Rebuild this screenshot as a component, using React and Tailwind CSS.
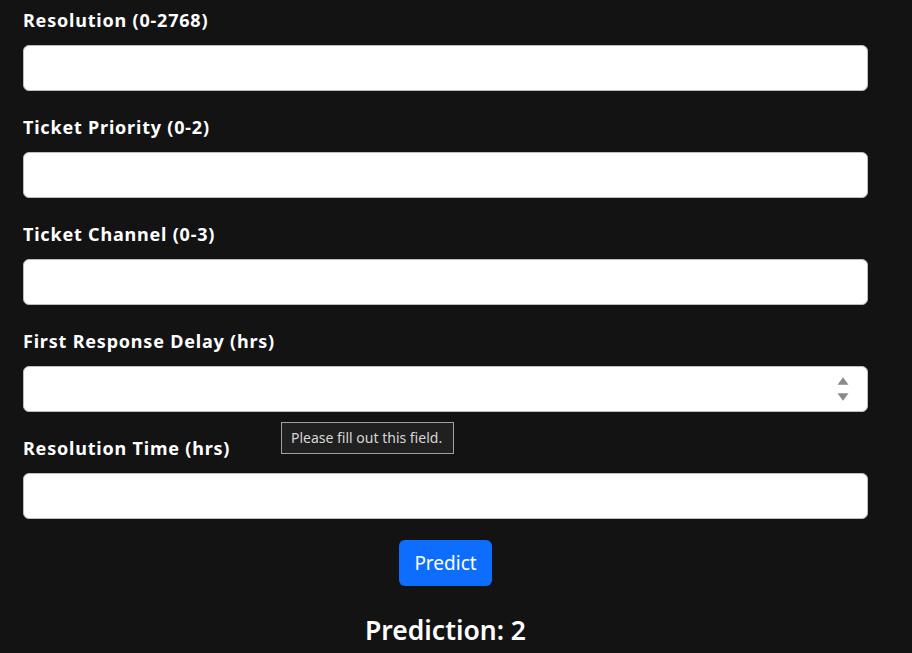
import React from "react";

const fields = [
  { label: "Resolution (0-2768)" },
  { label: "Ticket Priority (0-2)" },
  { label: "Ticket Channel (0-3)" },
  { label: "First Response Delay (hrs)", spinner: true },
  { label: "Resolution Time (hrs)" },
];

export default function App() {
  return (
    <div
      className="relative w-[912px] h-[653px] overflow-hidden bg-[#131313] text-white"
      style={{ fontFamily: '"Noto Sans", "Open Sans", sans-serif' }}
    >
      <div className="ml-[23px] w-[845px] pt-[7px]">
        <div className="flex flex-col gap-[23px]">
          {fields.map((f) => (
            <div key={f.label}>
              <div className="h-[27px] mb-[11px] text-[18px] font-bold leading-[27px] tracking-[0.8px]">
                {f.label}
              </div>
              <div className="relative h-[46px] rounded-[6px] bg-white border border-[#bdbdbd]">
                {f.spinner && (
                  <div className="absolute right-[18px] top-[10px] flex flex-col items-center gap-[8px]">
                    <svg width="12" height="8" viewBox="0 0 12 8">
                      <path d="M6 0.3 L11.5 7.7 L0.5 7.7 Z" fill="#8a8a8a" />
                    </svg>
                    <svg width="12" height="8" viewBox="0 0 12 8">
                      <path d="M0.5 0.3 L11.5 0.3 L6 7.7 Z" fill="#8a8a8a" />
                    </svg>
                  </div>
                )}
              </div>
            </div>
          ))}
        </div>
        <div className="flex justify-center mt-[21px]">
          <button className="w-[93px] h-[46px] rounded-[6px] bg-[#0d6efd] text-white text-[19px]">
            Predict
          </button>
        </div>
        <div className="mt-[27px] text-center text-[26.5px] font-semibold leading-[34px]">Prediction: 2</div>
      </div>
      <div
        className="absolute left-[281px] top-[422px] w-[173px] h-[32px] border border-[#a0a0a0] bg-[#202020] text-[#d6d6d6] text-[14px] leading-[30px] pl-[9px]"
        style={{ fontFamily: '"Noto Sans", sans-serif' }}
      >
        Please fill out this field.
      </div>
    </div>
  );
}
